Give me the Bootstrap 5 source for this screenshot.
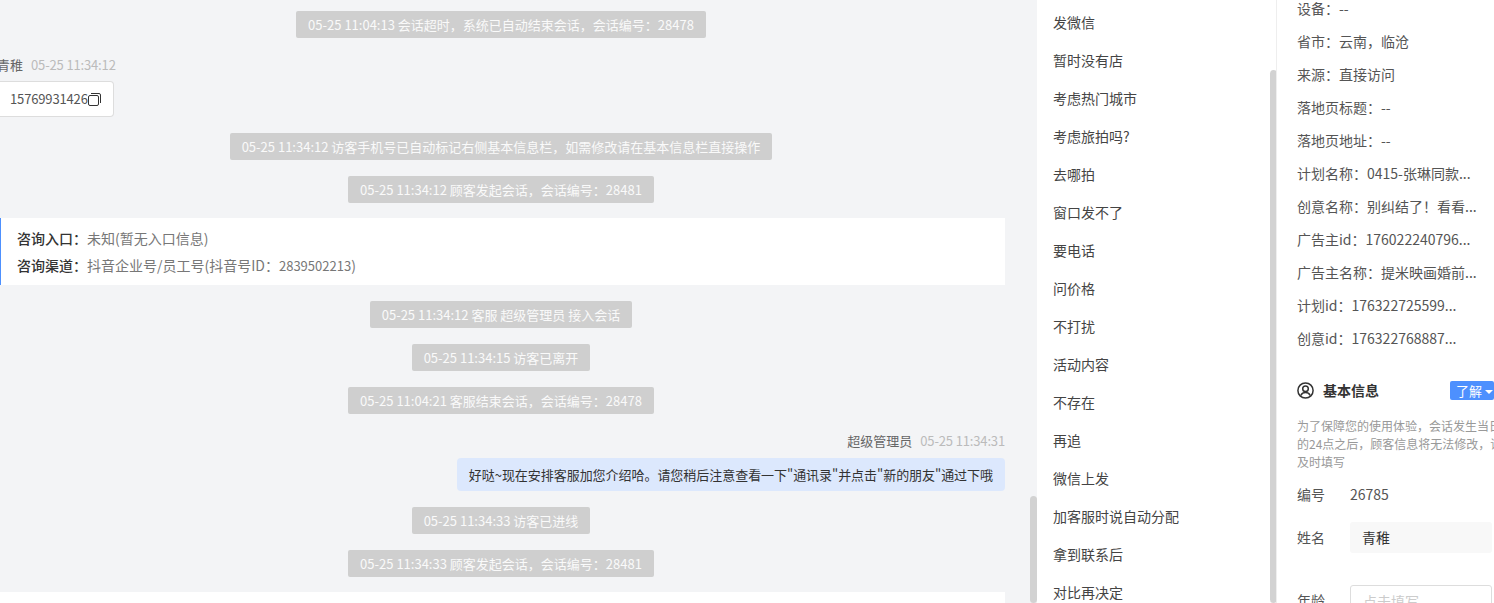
<!DOCTYPE html>
<html lang="zh-CN">
<head>
  <meta charset="UTF-8">
  <meta name="viewport" content="width=device-width, initial-scale=1">
  <title>会话详情</title>
  <link href="https://cdn.jsdelivr.net/npm/bootstrap@5.3.0/dist/css/bootstrap.min.css" rel="stylesheet">
  <style>
    html, body { height: 603px; overflow: hidden; }
    body {
      font-family: "Noto Sans CJK SC", "Liberation Sans", sans-serif;
      font-size: 13px;
      color: #333;
      background: #fff;
    }
    .page-wrap { height: 603px; width: 1494px; overflow: hidden; }

    /* chat */
    .chat-pane { width: 1037px; height: 603px; background: #f3f4f6; flex: none; overflow: hidden; position: relative; padding: 11px 32px 0 0; }
    .sys-msg { background: #cfcfcf; color: #fafafa; height: 27px; line-height: 27px; padding: 0 12px; border-radius: 2px; margin-bottom: 16px; font-size: 13px; white-space: nowrap; margin-right: 3px; }
    .sys-row { display: flex; justify-content: center; }
    .msg-meta { height: 20px; line-height: 20px; margin: 1px 0 6px; color: #666; }
    .msg-meta .msg-time { color: #bbb; margin-left: 8px; letter-spacing: -.15px; }
    .visitor-meta { margin-left: -3px; }
    .agent-meta { margin-bottom: 7px; }
    .phone-bubble { width: 114px; height: 36px; margin-bottom: 16px; background: #fff; border: 1px solid #ddd; border-left: 0; border-radius: 0 4px 4px 0; padding-left: 10px; color: #555; letter-spacing: -.15px; }
    .entry-card { background: #fff; border-left: 1px solid #4d90fe; height: 67px; margin: -1px 0 16px; padding: 7px 0 0 16px; font-size: 14px; }
    .entry-card div { height: 27px; line-height: 27px; color: #777; white-space: nowrap; }
    .entry-card b { color: #333; font-weight: 500; }
    .entry-digits { font-size: 13px; }
    .agent-bubble { background: #dce8fd; height: 33px; line-height: 33px; padding: 0 12px; border-radius: 4px; margin-bottom: 16px; color: #333; white-space: nowrap; letter-spacing: -.04px; }
    .bottom-card { background: #fff; height: 40px; margin-top: -1px; }
    .thumb { position: absolute; width: 7px; background: #d2d2d2; border-radius: 4px; }

    /* phrases */
    .phrase-pane { width: 240px; height: 603px; flex: none; background: #fff; position: relative; border-right: 1px solid #eee; padding-top: 3px; overflow: hidden; font-size: 14px; }
    .phrase-item { height: 38px; line-height: 38px; padding-left: 16px; color: #444; }

    /* info */
    .info-pane { width: 217px; height: 603px; flex: none; padding-left: 20px; overflow: hidden; background: #fff; color: #555; font-size: 14px; }
    .info-row { height: 33px; line-height: 33px; white-space: nowrap; }
    .info-first { margin-top: -8px; }
    .basic-head { height: 20px; margin-top: 25px; }
    .basic-title { color: #333; font-weight: 700; margin-left: 9px; font-size: 14px; }
    .learn-btn { margin-left: auto; width: 44px; height: 19px; line-height: 19px; background: #4d90fe; color: #fff; border-radius: 2px; padding-left: 6px; flex: none; font-size: 13px; white-space: nowrap; }
    .caret-down { display: inline-block; border: 4px solid transparent; border-top-color: #fff; border-bottom: 0; margin-left: 3px; vertical-align: 2px; }
    .basic-desc { width: 208px; margin: 17px 0 0; font-size: 12px; line-height: 18px; color: #999; }
    .field-row { display: flex; align-items: center; }
    .field-no { margin-top: 13px; height: 20px; }
    .field-name { margin-top: 18px; }
    .field-age { margin-top: 32px; }
    .field-label { width: 53px; flex: none; }
    .field-box { width: 142px; height: 31px; line-height: 31px; padding-left: 12px; border-radius: 3px; flex: none; }
    .field-filled { background: #f8f8f8; color: #333; }
    .field-empty { border: 1px solid #ddd; color: #ccc; }
  </style>
</head>
<body>
  <div class="page-wrap d-flex">

    <!-- chat -->
    <div class="chat-pane">
      <div class="sys-row"><div class="sys-msg">05-25 11:04:13 会话超时，系统已自动结束会话，会话编号：28478</div></div>
      <div class="msg-meta visitor-meta">青稚<span class="msg-time">05-25 11:34:12</span></div>
      <div class="phone-bubble d-flex align-items-center">
        <span>15769931426</span>
        <svg width="13" height="13" viewBox="0 0 13 13" fill="none" stroke="#333" stroke-width="1"><rect x="0.5" y="2.5" width="10" height="10" rx="1.5"/><path d="M3 .5h8a1.5 1.5 0 0 1 1.5 1.5v8"/></svg>
      </div>
      <div class="sys-row"><div class="sys-msg">05-25 11:34:12 访客手机号已自动标记右侧基本信息栏，如需修改请在基本信息栏直接操作</div></div>
      <div class="sys-row"><div class="sys-msg">05-25 11:34:12 顾客发起会话，会话编号：28481</div></div>
      <div class="entry-card">
        <div><b>咨询入口：</b>未知(暂无入口信息)</div>
        <div><b>咨询渠道：</b>抖音企业号/员工号(抖音号ID：<span class="entry-digits">2839502213</span>)</div>
      </div>
      <div class="sys-row"><div class="sys-msg">05-25 11:34:12 客服 超级管理员 接入会话</div></div>
      <div class="sys-row"><div class="sys-msg">05-25 11:34:15 访客已离开</div></div>
      <div class="sys-row"><div class="sys-msg">05-25 11:04:21 客服结束会话，会话编号：28478</div></div>
      <div class="msg-meta agent-meta text-end">超级管理员<span class="msg-time">05-25 11:34:31</span></div>
      <div class="d-flex justify-content-end"><div class="agent-bubble">好哒~现在安排客服加您介绍哈。请您稍后注意查看一下"通讯录"并点击"新的朋友"通过下哦</div></div>
      <div class="sys-row"><div class="sys-msg">05-25 11:34:33 访客已进线</div></div>
      <div class="sys-row"><div class="sys-msg">05-25 11:34:33 顾客发起会话，会话编号：28481</div></div>
      <div class="bottom-card"></div>
      <div class="thumb" style="left:1030px;top:496px;height:107px"></div>
    </div>

    <!-- phrases -->
    <div class="phrase-pane">
      <div class="phrase-item">发微信</div>
      <div class="phrase-item">暂时没有店</div>
      <div class="phrase-item">考虑热门城市</div>
      <div class="phrase-item">考虑旅拍吗?</div>
      <div class="phrase-item">去哪拍</div>
      <div class="phrase-item">窗口发不了</div>
      <div class="phrase-item">要电话</div>
      <div class="phrase-item">问价格</div>
      <div class="phrase-item">不打扰</div>
      <div class="phrase-item">活动内容</div>
      <div class="phrase-item">不存在</div>
      <div class="phrase-item">再追</div>
      <div class="phrase-item">微信上发</div>
      <div class="phrase-item">加客服时说自动分配</div>
      <div class="phrase-item">拿到联系后</div>
      <div class="phrase-item">对比再决定</div>
      <div class="thumb" style="left:233px;top:70px;height:533px"></div>
    </div>

    <!-- visitor info -->
    <div class="info-pane">
      <div class="info-row info-first">设备：--</div>
      <div class="info-row">省市：云南，临沧</div>
      <div class="info-row">来源：直接访问</div>
      <div class="info-row">落地页标题：--</div>
      <div class="info-row">落地页地址：--</div>
      <div class="info-row">计划名称：0415-张琳同款...</div>
      <div class="info-row">创意名称：别纠结了！看看...</div>
      <div class="info-row">广告主id：176022240796...</div>
      <div class="info-row">广告主名称：提米映画婚前...</div>
      <div class="info-row">计划id：176322725599...</div>
      <div class="info-row">创意id：176322768887...</div>

      <div class="basic-head d-flex align-items-center">
        <svg width="17" height="17" viewBox="0 0 17 17" fill="none" stroke="#333" stroke-width="1.5"><circle cx="8.5" cy="8.500" r="7.600"/><circle cx="8.500" cy="6.800" r="2.800"/><path d="M3.800 13.500c1-2 2.700-2.900 4.700-2.900s3.700.9 4.700 2.900"/></svg>
        <span class="basic-title">基本信息</span>
        <span class="learn-btn">了解<i class="caret-down"></i></span>
      </div>
      <p class="basic-desc">为了保障您的使用体验，会话发生当日的24点之后，顾客信息将无法修改，请及时填写</p>

      <div class="field-row field-no"><span class="field-label">编号</span><span>26785</span></div>
      <div class="field-row field-name"><span class="field-label">姓名</span><span class="field-box field-filled">青稚</span></div>
      <div class="field-row field-age"><span class="field-label">年龄</span><span class="field-box field-empty">点击填写</span></div>
    </div>

  </div>
  <script src="https://cdn.jsdelivr.net/npm/bootstrap@5.3.0/dist/js/bootstrap.bundle.min.js"></script>
</body>
</html>
